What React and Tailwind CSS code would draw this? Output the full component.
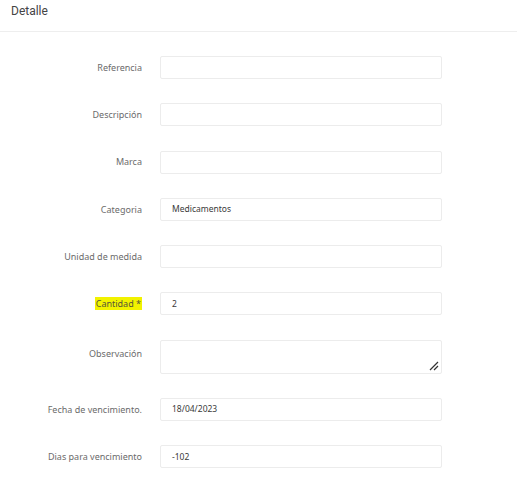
import React from 'react';

const fields = [
  { label: 'Referencia', value: '' },
  { label: 'Descripción', value: '' },
  { label: 'Marca', value: '' },
  { label: 'Categoria', value: 'Medicamentos' },
  { label: 'Unidad de medida', value: '' },
  { label: 'Cantidad *', value: '2', highlight: true },
  { label: 'Observación', value: '', textarea: true },
  { label: 'Fecha de vencimiento.', value: '18/04/2023' },
  { label: 'Dias para vencimiento', value: '-102' },
];

function Field({ label, value, highlight, textarea }) {
  return (
    <div className={`flex gap-[18px] ${textarea ? 'items-start' : 'items-center'}`}>
      <label className={`w-[142px] text-right text-[9px] text-[#6b6b6b] ${textarea ? 'pt-[7px]' : ''}`}>
        {highlight ? (
          <span className="bg-[#f2f200] px-[1px] text-[#55553a]">{label}</span>
        ) : (
          label
        )}
      </label>
      {textarea ? (
        <div className="relative h-[34px] w-[282px] rounded-[2px] border border-[#ececec] bg-white">
          <svg className="absolute bottom-[2px] right-[2px]" width="10" height="10" viewBox="0 0 10 10">
            <path d="M1 9 L9 1 M5 9 L9 5" stroke="#333" strokeWidth="1.2" fill="none" />
          </svg>
        </div>
      ) : (
        <div className="flex h-[23px] w-[282px] items-center rounded-[2px] border border-[#ececec] bg-white px-[11px] text-[8.5px] text-[#3a3a3a]">
          {value}
        </div>
      )}
    </div>
  );
}

export default function App() {
  return (
    <div className="min-h-[483px] w-[517px] bg-white" style={{ fontFamily: '"Noto Sans", sans-serif' }}>
      <div className="h-[32px] border-b border-[#eee] px-[11px] pt-[2px] text-[12px] text-[#444]" style={{ fontFamily: 'Roboto, sans-serif' }}>Detalle</div>
      <div className="flex flex-col gap-[24.3px] pt-[24px]">
        {fields.map((f) => (
          <Field key={f.label} {...f} />
        ))}
      </div>
    </div>
  );
}
